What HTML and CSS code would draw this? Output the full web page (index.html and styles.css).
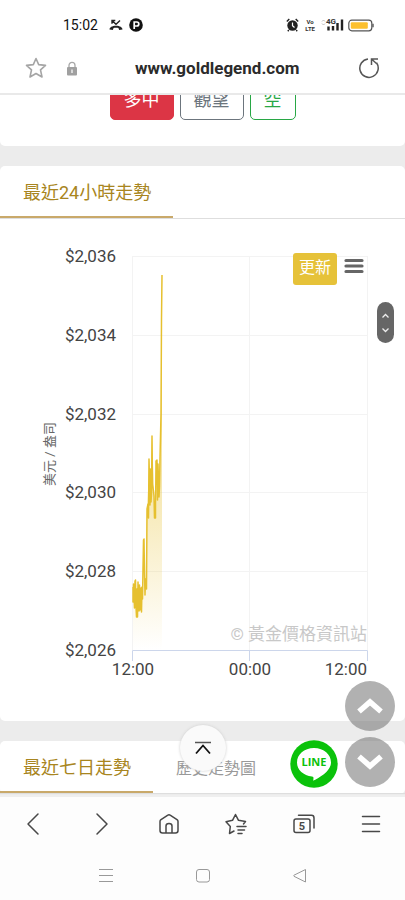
FILE: index.html
```html
<!DOCTYPE html>
<html lang="zh-Hant">
<head>
<meta charset="utf-8">
<meta name="viewport" content="width=device-width, initial-scale=1">
<title>www.goldlegend.com</title>
<link rel="stylesheet" href="styles.css">
</head>
<body>
<div class="screen">
  <header class="top">
    <div class="status">
      <time class="clock">15:02</time>
      <svg class="missed" width="14" height="12" viewBox="0 0 14 12"><path d="M.5 10.500C.5 8.500 3 6.800 7 6.800s6.500 1.700 6.500 3.700l-3.300.5-.8-2c-1.500-.5-3.300-.5-4.800 0l-.8 2z" fill="#222"/><path d="M3 4.800V1.500h3.300M3.200 1.700 7 5.300 11 1.500" fill="none" stroke="#222" stroke-width="1.400"/></svg>
      <svg width="14" height="14" viewBox="0 0 14 14"><circle cx="7" cy="7" r="6.800" fill="#111"/><path d="M5.200 11V4h2.600a1.900 1.900 0 0 1 0 4H5.200" fill="none" stroke="#fff" stroke-width="1.700"/></svg>
      <span class="spacer"></span>
      <svg width="13" height="14" viewBox="0 0 13 14"><circle cx="6.500" cy="7.500" r="5.200" fill="#222"/><path d="M.8 3.500 3.300 1M12.200 3.500 9.700 1M2.800 12l-1 1.200M10.200 12l1 1.200" stroke="#222" stroke-width="1.400"/><path d="M6.500 4.500v3.300L8.500 9.500" stroke="#fff" stroke-width="1.200" fill="none"/></svg>
      <span class="volte"><span>Vo</span><span>LTE</span></span>
      <svg class="signal" width="23" height="14" viewBox="0 0 23 14"><path d="M1 3.500 2.500 2 4 3.500M1 5.500 2.500 7 4 5.500" fill="none" stroke="#bbb"/><text x="5" y="6" class="gen">4G</text><path d="M7.500 12.500v-4M12 12.500V8M16.500 12.500V5M21 12.500V1.500" stroke="#222" stroke-width="2.400"/></svg>
      <svg class="battery" width="26" height="13" viewBox="0 0 26 13"><rect x=".8" y="1.200" width="23" height="10.600" rx="3" fill="#fff" stroke="#555" stroke-width="1.200"/><rect x="2.800" y="3.200" width="17" height="6.600" rx="1" fill="#fcc02e"/><path d="M25 4.800v3.400" stroke="#555" stroke-width="1.400"/></svg>
    </div>
    <div class="address">
      <button class="icon" aria-label="加入書籤"><svg width="22" height="22" viewBox="0 0 22 22"><path d="M11 1.500 13.700 7.600 20.500 8.400 15.500 12.900 17 20 11 16.500 5 20 6.500 12.900 1.500 8.400 8.300 7.600z" fill="none" stroke="#a5a5a5" stroke-width="1.600" stroke-linejoin="round"/></svg></button>
      <svg class="lock" width="12" height="15" viewBox="0 0 12 15"><path d="M3 7V4.300a3 3 0 0 1 6 0V7" fill="none" stroke="#a8a8a8" stroke-width="1.300"/><rect x="1" y="6" width="10" height="8.500" rx="1" fill="#a0a0a0"/><path d="M6 8.500v3.500" stroke="#fff" stroke-width="1.200"/></svg>
      <span class="url">www.goldlegend.com</span>
      <button class="icon reload" aria-label="重新整理"><svg width="22" height="22" viewBox="0 0 22 22"><path d="M10 2A9.200 9.200 0 1 0 18.500 5.800" fill="none" stroke="#555" stroke-width="1.500"/><path d="M13.500 8V2H20M14 2.500 18.500 6.500" fill="none" stroke="#555" stroke-width="1.500"/></svg></button>
    </div>
  </header>

  <main class="page">
    <section class="card votes">
      <button class="btn red">多中</button>
      <button class="btn grey">觀望</button>
      <button class="btn green">空</button>
    </section>

    <section class="card">
      <nav class="tabs"><a class="tab active" href="#day">最近24小時走勢</a></nav>
      <div class="chart" id="day">
        <svg class="plot" viewBox="0 0 405 502" role="img" aria-label="美元 / 盎司">
          <defs><linearGradient id="gold" gradientUnits="userSpaceOnUse" x1="0" y1="56" x2="0" y2="431"><stop offset="0" stop-color="#e8c337" stop-opacity=".9"/><stop offset="1" stop-color="#e8c337" stop-opacity="0"/></linearGradient></defs>
          <path class="grid" d="M132 37.500H367M132 116.500H367M132 195.500H367M132 273.500H367M132 352.500H367M132.500 37V431M249.500 37V431M367.500 37V431"/>
          <text class="credit" x="367" y="421">© 黃金價格資訊站</text>
          <path fill="url(#gold)" d="M133 431V368L135 384 136 360 137 397 138 364 139 390 141 366 142 376 143.500 321 145 371 147 290 149.500 241 150.500 280 152 217 154 276 156 299 157.500 242 158.500 278 160 240 161 195 162 56V431z"/>
          <path class="series" d="M133 368V383L133.500 365 134.500 389 135 362 135.500 361 136 388 136.500 398 137 370 137.500 398 138 363 139 392 139.500 366 140 391 141 369 141.500 393 142 368 142.500 380 143 350 143.500 321 144 320 144.500 355 145 376 145.500 360 146.500 370 147 290 148 285 148.500 299 149 240 150 286 150.500 250 151 283 151.500 275 152 217 152.500 265 153.500 272 154 277 154.500 299 155.500 299 156 242 157 241 157.500 281 158 245 159 278 159.500 268 160 239 161 195 161.500 100 162 56"/>
          <path class="axis" d="M132.500 442V431.500H367.500V442M249.500 431V442"/>
          <g class="ylab"><text x="116" y="43">$2,036</text><text x="116" y="122">$2,034</text><text x="116" y="201">$2,032</text><text x="116" y="279">$2,030</text><text x="116" y="358">$2,028</text><text x="116" y="437">$2,026</text></g>
          <g class="xlab"><text x="133" y="456">12:00</text><text x="250" y="456">00:00</text><text class="last" x="367" y="456">12:00</text></g>
          <text class="unit" transform="translate(54 235) rotate(-90)">美元 / 盎司</text>
        </svg>
        <div class="tools">
          <button class="refresh">更新</button>
          <button class="icon" aria-label="圖表選單"><svg width="20" height="16" viewBox="0 0 20 16"><path d="M2 2.500H18M2 8H18M2 13.500H18" stroke="#666" stroke-width="3.200" stroke-linecap="round"/></svg></button>
        </div>
      </div>
    </section>

    <section class="card">
      <nav class="tabs"><a class="tab active" href="#week">最近七日走勢</a><a class="tab" href="#history">歷史走勢圖</a></nav>
    </section>
  </main>

  <button class="scroller" aria-label="捲動"><svg width="17" height="41" viewBox="0 0 17 41"><path d="M5.500 15.500 8.500 12.500 11.500 15.500M5.500 26.500 8.500 29.500 11.500 26.500" fill="none" stroke="#eee" stroke-width="1.300"/></svg></button>
  <button class="totop" aria-label="回到頂端"><svg width="18" height="14" viewBox="0 0 18 14"><path d="M1 1.500H17" stroke="#555" stroke-width="1.500"/><path d="M2 12.500 9 4.500 16 12.500" fill="none" stroke="#111" stroke-width="1.800"/></svg></button>
  <a class="line" href="#line" aria-label="LINE"><svg width="48" height="48" viewBox="0 0 48 48"><circle cx="24" cy="24" r="23.700" fill="#0bc20b"/><path d="M24 8C14 8 7 14.500 7 22.500c0 7.500 6.500 13 15 14 2 .3 1.500 2 1.200 4.200C28 38.500 41 31.500 41 22.500 41 14.500 34 8 24 8z" fill="#fff"/><text x="24" y="26" class="linetext">LINE</text></svg></a>
  <div class="jump">
    <button aria-label="向上"><svg width="28" height="18" viewBox="0 0 28 18"><path d="M3 14.500 14 5 25 14.500" fill="none" stroke="#fff" stroke-width="5.500"/></svg></button>
    <button aria-label="向下"><svg width="28" height="18" viewBox="0 0 28 18"><path d="M3 3.500 14 13 25 3.500" fill="none" stroke="#fff" stroke-width="5.500"/></svg></button>
  </div>

  <footer class="bottom">
    <nav class="browser">
      <button aria-label="上一頁"><svg width="24" height="24" viewBox="0 0 24 24"><path d="M16 2 6 12 16 22"/></svg></button>
      <button aria-label="下一頁"><svg width="24" height="24" viewBox="0 0 24 24"><path d="M8 2 18 12 8 22"/></svg></button>
      <button aria-label="首頁"><svg width="24" height="24" viewBox="0 0 24 24"><path d="M3 9.500Q3 8.500 4 7.700L10.500 3.300Q12 2.300 13.500 3.300L20 7.700Q21 8.500 21 9.500V18.500Q21 21 18.500 21H5.500Q3 21 3 18.500zM9 21V14Q9 11.500 12 11.500T15 14V21"/></svg></button>
      <button aria-label="書籤"><svg width="24" height="24" viewBox="0 0 24 24"><path d="M10 19 5.500 21.500 6.300 14.500 2 9.800 8.500 8.300 11.500 2.500 14.500 8.300 21.500 9.500 19.500 12M13 14.500H22M14 18H20.500M14 21.500H18"/></svg></button>
      <button aria-label="分頁"><svg width="24" height="24" viewBox="0 0 24 24"><rect x="2" y="7" width="16" height="13.500" rx="2"/><path d="M6.500 3.300H19.500Q22 3.300 22 6V16"/><text x="10" y="18">5</text></svg></button>
      <button aria-label="選單"><svg width="24" height="24" viewBox="0 0 24 24"><path d="M3.500 4.500H20.500M3.500 12H20.500M3.500 19.500H20.500"/></svg></button>
    </nav>
    <nav class="system">
      <button aria-label="最近使用"><svg width="16" height="16" viewBox="0 0 16 16"><path d="M1 1.500H15M1 7.500H15M1 13.500H15"/></svg></button>
      <button aria-label="主畫面"><svg width="16" height="16" viewBox="0 0 16 16"><rect x="1.500" y="1.500" width="13" height="12.500" rx="2.500"/></svg></button>
      <button aria-label="返回"><svg width="16" height="16" viewBox="0 0 16 16"><path d="M13.500 1.500V14L2 8.300Q1.200 7.700 2 7.200z"/></svg></button>
    </nav>
  </footer>
</div>
</body>
</html>
```
FILE: styles.css
```css
* { box-sizing: border-box; }
body { margin: 0; font-family: Roboto, "Noto Sans CJK TC", sans-serif; color: #444; }
button { font: inherit; border: 0; padding: 0; background: none; display: flex; align-items: center; justify-content: center; }
a { text-decoration: none; }
svg { display: block; flex: none; }
.screen { position: relative; height: 100vh; display: flex; flex-direction: column; overflow: hidden; background: #fff; }

.top { flex: none; background: #fff; border-bottom: 2px solid #e9e9e9; }
.status { display: flex; align-items: center; height: 43px; padding: 7px 31px 0 63px; }
.clock { font-size: 14px; line-height: 16px; color: #111; }
.missed { margin: 0 6px 0 11px; }
.spacer { flex: 1; }
.volte { display: flex; flex-direction: column; align-items: center; margin-left: 6px; font-size: 6px; line-height: 7px; font-weight: 700; color: #333; }
.signal { margin: 0 4px 0 6px; }
.gen { font-size: 8px; font-weight: 700; fill: #333; }
.address { display: flex; align-items: center; height: 50px; padding: 0 25px; }
.lock { margin-left: 19px; }
.url { margin-left: 57px; font-size: 17px; line-height: 20px; font-weight: 700; color: #2b2b2b; }
.reload { margin-left: auto; }

.page { flex: 1; min-height: 0; overflow: hidden; display: flex; flex-direction: column; gap: 20px; background: #ececec; }
.card { flex: none; background: #fff; border-radius: 5px; }
.votes { display: flex; justify-content: center; gap: 6px; margin-top: -13px; padding-bottom: 26px; }
.btn { height: 38px; padding: 0 13px 2px; border: 1px solid; border-radius: 5px; font-size: 18px; line-height: 24px; }
.red { background: #dc3545; border-color: #dc3545; color: #fff; }
.grey { color: #6c757d; }
.green { color: #28a745; }

.tabs { display: flex; height: 53px; border-bottom: 1px solid #dedede; }
.tab { display: flex; align-items: center; padding: 3px 23px 0; font-size: 16px; line-height: 24px; color: #999; }
.active { padding-right: 22px; font-size: 18px; color: #a88520; border-bottom: 2px solid #c9a96a; }

.chart { position: relative; }
.plot { width: 100%; height: auto; }
.plot text { font-size: 17px; fill: #444; }
.grid { fill: none; stroke: #f3f3f3; }
.axis { fill: none; stroke: #ccd6eb; }
.series { fill: none; stroke: #e6c02f; stroke-width: 1.5; stroke-linejoin: round; }
.ylab, .xlab .last { text-anchor: end; }
.xlab { text-anchor: middle; }
.plot .credit { fill: #c8c8c8; text-anchor: end; }
.plot .unit { font-size: 13px; fill: #666; text-anchor: middle; }
.tools { position: absolute; top: 34px; right: 41px; display: flex; gap: 7px; }
.tools .icon { height: 26px; }
.refresh { width: 44px; height: 32px; padding-bottom: 3px; border-radius: 3px; background: #e6c239; color: #fff; font-size: 16px; line-height: 24px; }

.scroller { position: absolute; top: 302px; right: 11px; border-radius: 9px; background: #666; }
.totop { position: absolute; bottom: 129px; left: 50%; width: 46px; height: 46px; margin-left: -23px; border-radius: 50%; background: #fafafa; box-shadow: 0 0 3px #ccc; }
.line { position: absolute; right: 67px; bottom: 112px; }
.linetext { font: 700 11px "Open Sans", sans-serif; fill: #0bc20b; text-anchor: middle; }
.jump { position: absolute; right: 10px; bottom: 113px; display: grid; gap: 6px; }
.jump button { width: 50px; height: 50px; border-radius: 50%; background: rgba(110, 110, 110, .54); }

.bottom { flex: none; background: #fdfdfd; border-top: 2px solid #efefef; }
.browser { display: grid; grid-template-columns: repeat(6, 1fr); height: 54px; }
.browser svg { fill: none; stroke: #484848; stroke-width: 1.5; stroke-linejoin: round; stroke-linecap: round; }
.browser text { font-size: 11px; font-weight: 700; fill: #484848; stroke: none; text-anchor: middle; }
.system { display: grid; grid-template-columns: repeat(3, 1fr); height: 49px; padding: 0 57px; }
.system svg { fill: none; stroke: #999; stroke-width: 1; }
```
